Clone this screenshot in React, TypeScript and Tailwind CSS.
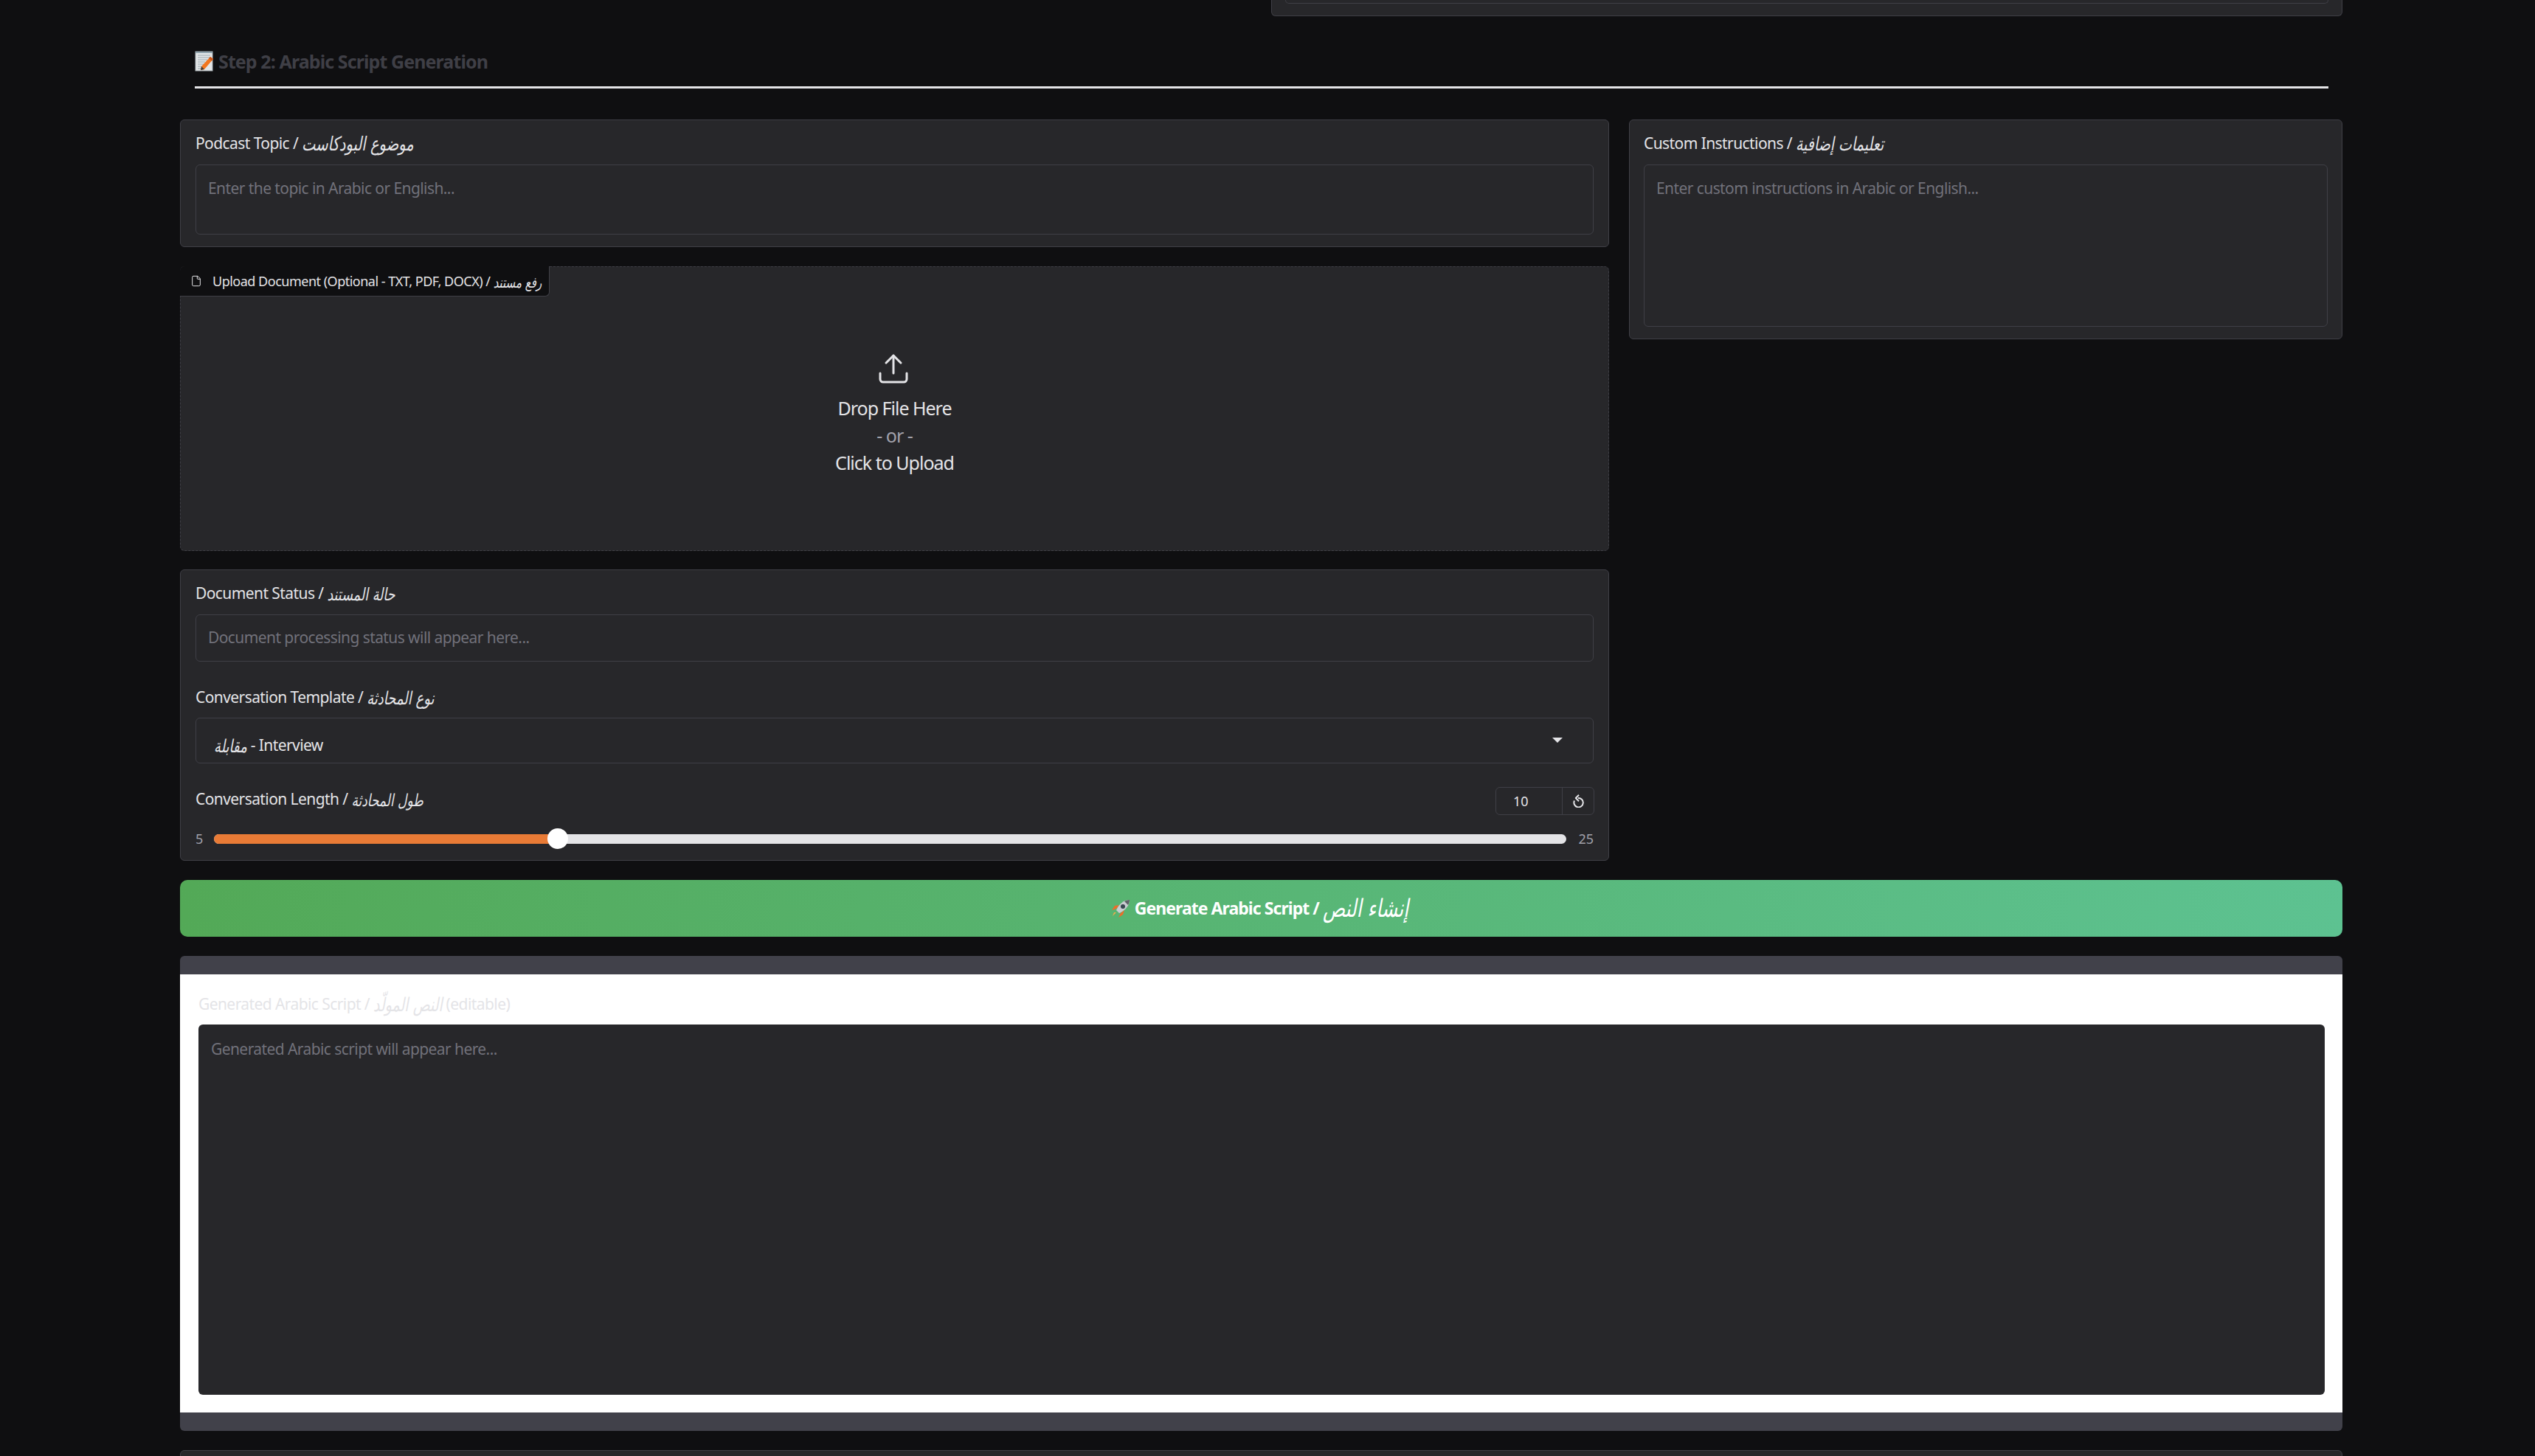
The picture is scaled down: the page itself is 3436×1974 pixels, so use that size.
import React from "react";
import { File, Upload } from "lucide-react";

function Ar({ children, className = "" }: { children: React.ReactNode; className?: string }) {
  return <span className={`inline-block scale-y-[1.35] [font-family:'DejaVu_Sans',sans-serif] italic ${className}`}>{children}</span>;
}

function Memo() {
  return (
    <svg width="26" height="28" viewBox="0 0 26 28" className="shrink-0">
      <rect x="1" y="1" width="23" height="26" fill="#e3e6e8" stroke="#a8b0b5" strokeWidth="1" />
      <rect x="1" y="1" width="23" height="2" fill="#90a4ae" />
      <path d="M4 6h17M4 9h17M4 12h13M4 15h10M4 18h8M4 21h6M4 24h5" stroke="#9aa5ab" strokeWidth="1.2" />
      <path d="M21 8 L25 11 L13 25 L8 26 L9 21 Z" fill="#f2761f" />
      <path d="M21 8 L25 11 L23 13.5 L19 10.5Z" fill="#c9551a" />
      <path d="M8 26 L9 21 L13 25Z" fill="#3a3a3a" />
    </svg>
  );
}

function Rocket() {
  return (
    <svg width="26" height="26" viewBox="0 0 26 26" className="shrink-0">
      <path d="M7 13 L1 15 L5 9 L11 8Z" fill="#ef6c28" />
      <path d="M13 19 L10 25 L16 21 L18 15Z" fill="#ef6c28" />
      <path d="M25 1 C18 1 11 6 7 15 L11 19 C20 15 25 8 25 1Z" fill="#c9ccd1" />
      <path d="M25 1 C22 1 20 2 18 3 L23 8 C24 6 25 4 25 1Z" fill="#5f6368" />
      <circle cx="16" cy="10" r="3" fill="#37474f" />
      <path d="M7 18 L2 23 L4 18Z" fill="#f7a84a" />
    </svg>
  );
}

function Reset() {
  return (
    <svg width="16" height="18" viewBox="0 0 16 18" fill="none" stroke="#e4e4e7" strokeWidth="2" className="shrink-0 -ml-[1px]">
      <path d="M3 8.5 A6.2 6.2 0 1 0 8 5" />
      <path d="M9 0.8 L4.8 5 L9 9.2" strokeLinejoin="round" />
    </svg>
  );
}

function Label({ en, ar, size }: { en: string; ar: string; size: string }) {
  return (
    <div className="h-[32px] leading-[32px] whitespace-nowrap">
      {en}
      <Ar className={`${size} tracking-normal`}>{ar}</Ar>
    </div>
  );
}

export default function App() {
  return (
    <div className="w-full h-[1974px] overflow-hidden bg-[#0f0f11] pl-[244px] pr-[261px] flex flex-col [font-family:'Noto_Sans',sans-serif] text-[#e4e4e7] text-[21px] tracking-[-0.58px]">
      <div className="self-end w-[1452px] h-[22px] shrink-0 bg-[#27272a] border-x border-b border-[#3f3f46] rounded-b-[6px] px-[18px]">
        <div className="h-[5px] border-x border-b border-[#3f3f46] rounded-b-[6px]" />
      </div>

      <div className="ml-[20px] mr-[19px] h-[98px] shrink-0 border-b-[3px] border-[#e4e4e7] flex items-start pt-[47px] gap-[6px]">
        <Memo />
        <span className="font-bold text-[25px] leading-[28px] tracking-[-0.9px] text-[#3f3f46]">Step 2: Arabic Script Generation</span>
      </div>

      <div className="mt-[42px] flex gap-[27px] items-start shrink-0">
        <div className="w-[1937px] flex flex-col shrink-0">
          <section className="h-[173px] bg-[#27272a] border border-[#3f3f46] rounded-[6px] px-[20px] pt-[15px]">
            <Label en="Podcast Topic / " ar="موضوع البودكاست" size="text-[19.5px]" />
            <div className="mt-[13px] h-[95px] border border-[#3f3f46] rounded-[6px] px-[16px] pt-[17px] leading-[28px] text-[#71717a]">
              Enter the topic in Arabic or English...
            </div>
          </section>

          <section className="mt-[26px] h-[386px] bg-[#27272a] border border-dashed border-[#3f3f46] rounded-[6px] flex flex-col">
            <div className="h-[41px] w-[501px] shrink-0 bg-[#0f0f11] border-r border-b border-[#3f3f46] rounded-br-[6px] rounded-tl-[6px] flex items-center pl-[14px] gap-[14px] text-[18px] tracking-[-0.5px] -ml-px -mt-px">
              <File size={16} strokeWidth={1.5} className="text-[#e4e4e7] shrink-0" />
              <span className="whitespace-nowrap pt-[1px]">Upload Document (Optional - TXT, PDF, DOCX) / <Ar className="text-[15px] tracking-normal">رفع مستند</Ar></span>
            </div>
            <div className="flex-1 flex flex-col items-center pt-[74px] text-[25px] tracking-[-1px] leading-[37px]">
              <Upload size={48} strokeWidth={1.5} className="-ml-[4px] mb-[11px]" />
              <span>Drop File Here</span>
              <span className="text-[#a1a1aa]">- or -</span>
              <span>Click to Upload</span>
            </div>
          </section>

          <section className="mt-[25px] h-[395px] bg-[#27272a] border border-[#3f3f46] rounded-[6px] px-[20px] pt-[15px]">
            <Label en="Document Status / " ar="حالة المستند" size="text-[17.5px]" />
            <div className="mt-[13px] h-[64px] border border-[#3f3f46] rounded-[6px] px-[16px] flex items-center text-[#71717a]">
              Document processing status will appear here...
            </div>
            <div className="mt-[32px]">
              <Label en="Conversation Template / " ar="نوع المحادثة" size="text-[18px]" />
            </div>
            <div className="mt-[12px] h-[62px] border border-[#3f3f46] rounded-[6px] pl-[24px] pr-[41px] flex items-center justify-between">
              <span className="pt-[13px] leading-[28px]"><Ar className="text-[18px]">مقابلة</Ar> - Interview</span>
              <span className="w-0 h-0 border-x-[7px] border-x-transparent border-t-[7px] border-t-[#e4e4e7] -mt-[2px]" />
            </div>
            <div className="mt-[32px] flex items-start justify-between h-[38px]">
              <Label en="Conversation Length / " ar="طول المحادثة" size="text-[17px]" />
              <div className="-mr-px flex h-[38px] w-[134px] border border-[#3f3f46] rounded-[6px] text-[18px] tracking-normal">
                <div className="flex-1 flex items-center pl-[23px] border-r border-[#3f3f46]">10</div>
                <div className="w-[42px] flex items-center justify-center"><Reset /></div>
              </div>
            </div>
            <div className="mt-[18px] flex items-center h-[28px] text-[18px] text-[#a1a1aa] tracking-normal">
              <span className="w-[25px] shrink-0">5</span>
              <div className="relative flex-1 h-[13px] rounded-full bg-[#e4e4e7]">
                <div className="h-full w-[25.4%] rounded-full bg-[#e97b36]" />
                <div className="absolute left-[25.4%] top-1/2 -translate-x-1/2 -translate-y-1/2 w-[28px] h-[28px] rounded-full bg-white" />
              </div>
              <span className="w-[37px] shrink-0 text-right">25</span>
            </div>
          </section>
        </div>

        <section className="flex-1 h-[298px] bg-[#27272a] border border-[#3f3f46] rounded-[6px] px-[19px] pt-[15px]">
          <Label en="Custom Instructions / " ar="تعليمات إضافية" size="text-[19px]" />
          <div className="mt-[13px] h-[220px] border border-[#3f3f46] rounded-[6px] px-[16px] pt-[17px] leading-[28px] text-[#71717a]">
            Enter custom instructions in Arabic or English...
          </div>
        </section>
      </div>

      <button className="mt-[26px] h-[77px] shrink-0 rounded-[10px] bg-gradient-to-r from-[#53a957] to-[#5dc291] text-white font-bold text-[23px] tracking-[-0.95px] flex items-center justify-center gap-[6px] pr-[4px]">
        <Rocket />
        <span>Generate Arabic Script / <Ar className="text-[25px] font-normal tracking-normal">إنشاء النص</Ar></span>
      </button>

      <section className="mt-[26px] h-[644px] shrink-0 bg-[#41414a] rounded-[6px] py-[25px]">
        <div className="h-full bg-white pl-[25px] pr-[24px] pt-[26px]">
          <div className="h-[28px] leading-[28px] text-[#e4e4e7]">
            Generated Arabic Script / <Ar className="text-[19px] tracking-normal">النص المولّد</Ar> (editable)
          </div>
          <div className="mt-[14px] h-[502px] bg-[#27272a] rounded-[6px] px-[17px] pt-[19px] leading-[28px] text-[#71717a]">
            Generated Arabic script will appear here...
          </div>
        </div>
      </section>

      <div className="mt-[26px] h-[40px] shrink-0 bg-[#27272a] border border-[#3f3f46] rounded-t-[6px]" />
    </div>
  );
}
